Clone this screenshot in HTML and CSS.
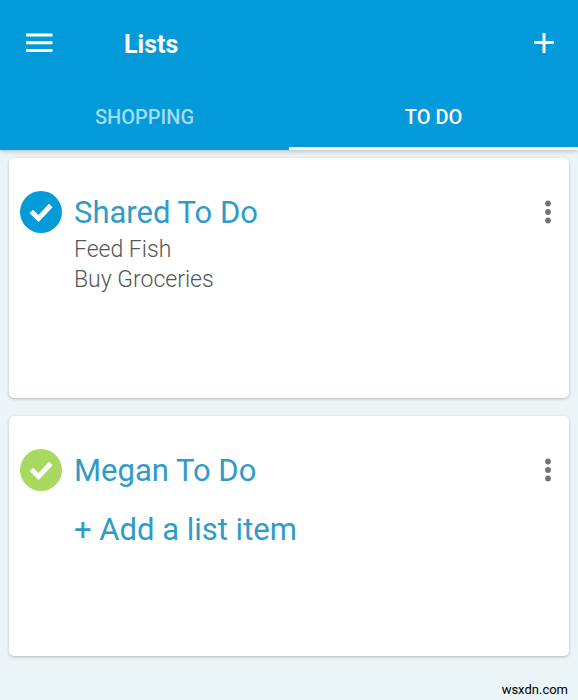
FILE: index.html
```html
<!DOCTYPE html>
<html lang="en">
<head>
<meta charset="utf-8">
<meta name="viewport" content="width=device-width, initial-scale=1">
<title>Lists</title>
<link rel="stylesheet" href="styles.css">
</head>
<body>
<header class="header">
  <div class="topbar">
    <button class="icon-button" type="button" aria-label="Menu">
      <svg width="28" height="20" viewBox="0 0 28 20"><path d="M1 2h26.500M1 9.800h26.500M1 17.500h26.500" stroke="#fff" stroke-width="3"/></svg>
    </button>
    <h1 class="title">Lists</h1>
    <button class="icon-button" type="button" aria-label="Add list">
      <svg width="20" height="20" viewBox="0 0 20 20"><path d="M0 9.500h20M10 0v20" stroke="#fff" stroke-width="3"/></svg>
    </button>
  </div>
  <nav class="tabs">
    <a class="tab" href="#shopping">SHOPPING</a>
    <a class="tab tab-active" href="#todo" aria-current="page">TO DO</a>
  </nav>
</header>
<main class="lists" id="todo">
  <section class="card">
    <svg class="badge" viewBox="0 0 42 42"><circle cx="21" cy="21" r="21" fill="#059bd9"/><path d="M11.300 20.500l7.200 7L30.800 14.500" fill="none" stroke="#fff" stroke-width="5"/></svg>
    <div class="card-body">
      <h2 class="card-title">Shared To Do</h2>
      <ul class="items">
        <li>Feed Fish</li>
        <li>Buy Groceries</li>
      </ul>
    </div>
    <button class="icon-button more" type="button" aria-label="Shared To Do options">
      <svg width="6" height="24" viewBox="0 0 6 24" fill="#737373"><circle cx="3" cy="3.500" r="2.900"/><circle cx="3" cy="12" r="2.900"/><circle cx="3" cy="20.500" r="2.900"/></svg>
    </button>
  </section>
  <section class="card">
    <svg class="badge" viewBox="0 0 42 42"><circle cx="21" cy="21" r="21" fill="#a8d860"/><path d="M11.300 20.500l7.200 7L30.800 14.500" fill="none" stroke="#fff" stroke-width="5"/></svg>
    <div class="card-body">
      <h2 class="card-title">Megan To Do</h2>
      <button class="add-item" type="button">+ Add a list item</button>
    </div>
    <button class="icon-button more" type="button" aria-label="Megan To Do options">
      <svg width="6" height="24" viewBox="0 0 6 24" fill="#737373"><circle cx="3" cy="3.500" r="2.900"/><circle cx="3" cy="12" r="2.900"/><circle cx="3" cy="20.500" r="2.900"/></svg>
    </button>
  </section>
</main>
<footer class="footer">wsxdn.com</footer>
</body>
</html>
```
FILE: styles.css
```css
* {
  box-sizing: border-box;
}

body {
  margin: 0;
  min-height: 100vh;
  display: flex;
  flex-direction: column;
  background: #ebf5f8;
  font-family: Roboto, "Liberation Sans", sans-serif;
}

h1, h2, ul {
  margin: 0;
  padding: 0;
}

button {
  border: 0;
  padding: 0;
  background: none;
  font: inherit;
  cursor: pointer;
}

.icon-button {
  display: flex;
  align-items: center;
}

.header {
  background: #039ad9;
  box-shadow: 0 1px 5px rgba(0, 0, 0, 0.25);
}

.topbar {
  display: flex;
  align-items: center;
  height: 86px;
  padding: 0 24px 0 25px;
}

.title {
  flex: 1;
  margin-left: 71px;
  padding-top: 3px;
  color: #fff;
  font-size: 25px;
  font-weight: 700;
  line-height: 32px;
}

.tabs {
  display: flex;
}

.tab {
  flex: 1;
  padding-top: 2px;
  border-bottom: 3px solid transparent;
  color: #a4dbf5;
  font-size: 20px;
  font-weight: 500;
  line-height: 59px;
  text-align: center;
  text-decoration: none;
}

.tab-active {
  border-bottom-color: #fff;
  color: #fff;
}

.lists {
  display: grid;
  gap: 18px;
  padding: 8px 9px 0;
}

.card {
  display: flex;
  align-items: flex-start;
  min-height: 240px;
  padding: 33px 18px 24px 11px;
  border-radius: 5px;
  background: #fff;
  box-shadow: 0 1px 3px rgba(0, 0, 0, 0.25);
}

.badge {
  flex: none;
  width: 42px;
  height: 42px;
}

.card-body {
  flex: 1;
  margin-left: 12px;
}

.card-title,
.add-item {
  color: #309bc8;
  font-size: 31px;
  font-weight: 400;
  line-height: 44px;
}

.add-item {
  display: block;
  margin-top: 15px;
}

.items {
  list-style: none;
  color: #555;
  font-size: 23px;
  font-weight: 300;
  line-height: 30px;
}

.more {
  height: 42px;
}

.footer {
  margin-top: auto;
  padding: 0 10px 2px;
  color: #000;
  font-size: 13px;
  line-height: 16px;
  text-align: right;
}
```
